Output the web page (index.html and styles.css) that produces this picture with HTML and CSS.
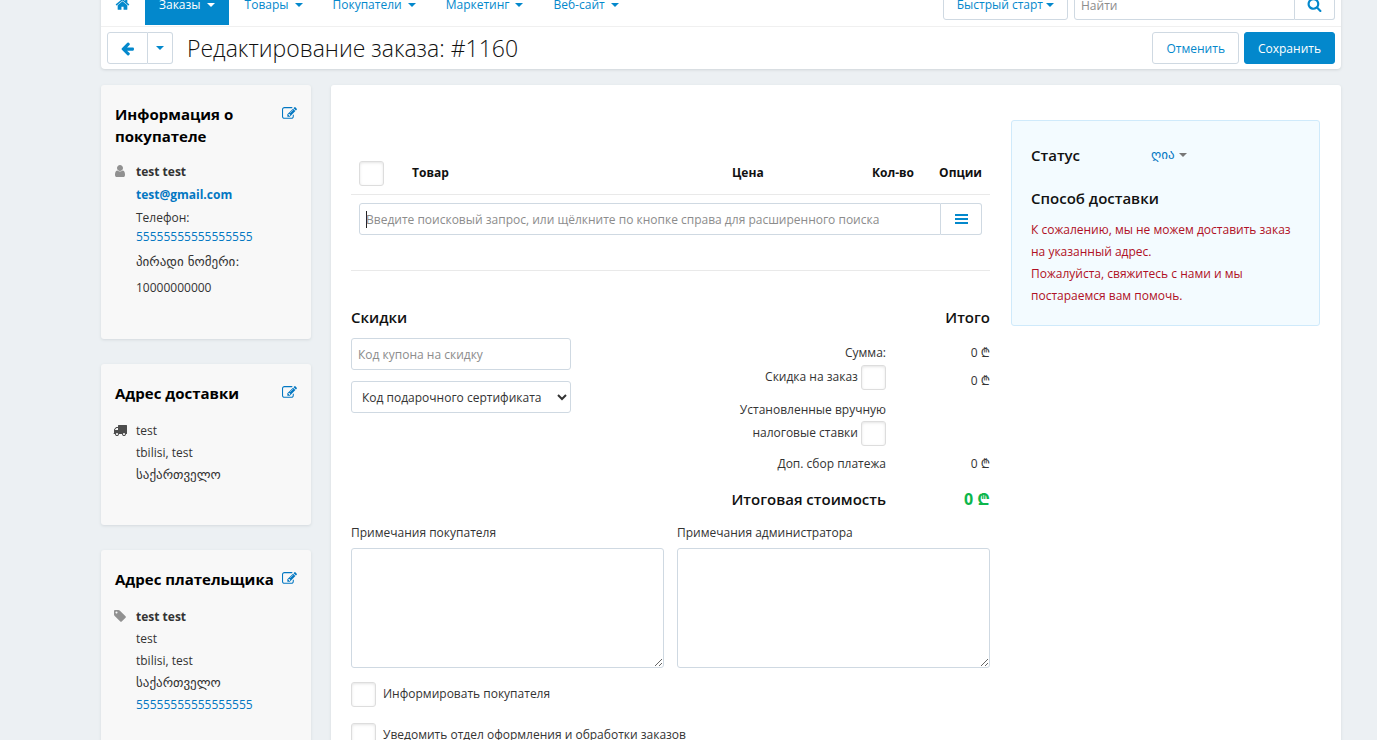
FILE: index.html
```html
<!DOCTYPE html>
<html lang="ru">
<head>
<meta charset="utf-8">
<meta name="viewport" content="width=device-width, initial-scale=1">
<title>Редактирование заказа: #1160</title>
<link rel="stylesheet" href="styles.css">
</head>
<body>
<svg class="sprite" aria-hidden="true">
  <symbol id="i-home" viewBox="0 0 1792 1792"><path d="M1472 992v480q0 26-19 45t-45 19h-384v-384h-256v384h-384q-26 0-45-19t-19-45v-480q0-1 .5-3t.5-3l575-474 575 474q1 2 1 6zm223-69l-62 74q-8 9-21 11h-3q-13 0-21-7l-692-577-692 577q-12 8-24 7-13-2-21-11l-62-74q-8-10-7-23.5t11-21.5l719-599q32-26 76-26t76 26l244 204v-195q0-14 9-23t23-9h192q14 0 23 9t9 23v408l219 182q10 8 11 21.5t-7 23.5z"/></symbol>
  <symbol id="i-back" viewBox="0 0 1792 1792"><path d="M1664 896v128q0 53-32.5 90.5t-84.5 37.5h-704l293 294q38 36 38 90t-38 90l-75 76q-37 37-90 37-52 0-91-37l-651-652q-37-37-37-90 0-52 37-91l651-650q38-38 91-38 52 0 90 38l75 74q38 38 38 91t-38 91l-293 293h704q52 0 84.5 37.5t32.5 90.5z"/></symbol>
  <symbol id="i-search" viewBox="0 0 1792 1792"><path d="M1216 832q0-185-131.5-316.5t-316.5-131.5-316.5 131.5-131.5 316.5 131.5 316.5 316.5 131.5 316.5-131.5 131.5-316.5zm512 832q0 52-38 90t-90 38q-54 0-90-38l-343-342q-179 124-399 124-143 0-273.5-55.5t-225-150-150-225-55.5-273.5 55.5-273.5 150-225 225-150 273.5-55.5 273.5 55.5 225 150 150 225 55.5 273.5q0 220-124 399l343 343q37 37 37 90z"/></symbol>
  <symbol id="i-edit" viewBox="0 0 1792 1792"><path d="M888 1184l116-116-152-152-116 116v56h96v96h56zm440-720q-16-16-33 1l-350 350q-17 17-1 33t33-1l350-350q17-17 1-33zm80 594v190q0 119-84.5 203.5t-203.5 84.5h-832q-119 0-203.5-84.5t-84.5-203.5v-832q0-119 84.5-203.5t203.5-84.5h832q63 0 117 25 15 7 18 23 3 17-9 29l-49 49q-14 14-32 8-23-6-45-6h-832q-66 0-113 47t-47 113v832q0 66 47 113t113 47h832q66 0 113-47t47-113v-126q0-13 9-22l64-64q15-15 35-7t20 29zm-96-738l288 288-672 672h-288v-288zm444 132l-92 92-288-288 92-92q28-28 68-28t68 28l152 152q28 28 28 68t-28 68z"/></symbol>
  <symbol id="i-user" viewBox="0 0 1792 1792"><path d="M1536 1399q0 109-62.5 187t-150.5 78h-854q-88 0-150.5-78t-62.5-187q0-85 8.5-160.5t31.5-152 58.5-131 94-89 134.5-34.5q131 128 313 128t313-128q76 0 134.5 34.5t94 89 58.5 131 31.5 152 8.5 160.5zm-256-887q0 159-112.5 271.5t-271.5 112.5-271.5-112.5-112.5-271.5 112.5-271.5 271.5-112.5 271.5 112.5 112.5 271.5z"/></symbol>
  <symbol id="i-truck" viewBox="0 0 1792 1792"><path d="M640 1408q0-52-38-90t-90-38-90 38-38 90 38 90 90 38 90-38 38-90zm-384-512h384v-256h-158q-13 0-22 9l-195 195q-9 9-9 22v30zm1280 512q0-52-38-90t-90-38-90 38-38 90 38 90 90 38 90-38 38-90zm256-1088v1024q0 15-4 26.5t-13.5 18.5-16.5 11.5-23.5 6-22.5 2-25.5 0-22.5-.5q0 106-75 181t-181 75-181-75-75-181h-384q0 106-75 181t-181 75-181-75-75-181h-64q-3 0-22.5.5t-25.5 0-22.5-2-23.5-6-16.5-11.5-13.5-18.5-4-26.5q0-26 19-45t45-19v-320q0-8-.5-35t0-38 2.5-34.5 6.5-37 14-30.5 22.5-30l198-198q19-19 50.5-32t58.5-13h160v-192q0-26 19-45t45-19h1024q26 0 45 19t19 45z"/></symbol>
  <symbol id="i-tag" viewBox="0 0 1792 1792"><path d="M576 448q0-53-37.5-90.5t-90.5-37.5-90.5 37.5-37.5 90.5 37.5 90.5 90.5 37.5 90.5-37.5 37.5-90.5zm1067 576q0 53-37 90l-491 492q-39 37-91 37-53 0-90-37l-715-716q-38-37-64.5-101t-26.5-117v-416q0-52 38-90t90-38h416q53 0 117 26.5t102 64.5l715 714q37 39 37 91z"/></symbol>
  <symbol id="i-bars" viewBox="0 0 13 10"><path d="M0 0h13v2H0zM0 4h13v2H0zM0 8h13v2H0z"/></symbol>
</svg>

<div class="shell">
  <header class="top">
    <div class="navbar">
      <nav class="menu">
        <a class="home" href="#" aria-label="Главная"><svg class="icon"><use href="#i-home"/></svg></a>
        <a class="active" href="#">Заказы<span class="caret"></span></a>
        <a href="#">Товары<span class="caret"></span></a>
        <a href="#">Покупатели<span class="caret"></span></a>
        <a href="#">Маркетинг<span class="caret"></span></a>
        <a href="#">Веб-сайт<span class="caret"></span></a>
      </nav>
      <div class="tools">
        <button class="btn quick" type="button">Быстрый старт<span class="caret"></span></button>
        <form class="group find">
          <input class="field" type="search" placeholder="Найти" aria-label="Найти">
          <button class="btn" type="button" aria-label="Искать"><svg class="icon"><use href="#i-search"/></svg></button>
        </form>
      </div>
    </div>
    <div class="titlebar">
      <div class="group back">
        <button class="btn" type="button" aria-label="Назад"><svg class="icon"><use href="#i-back"/></svg></button>
        <button class="btn" type="button" aria-label="История"><span class="caret"></span></button>
      </div>
      <h1>Редактирование заказа: #1160</h1>
      <button class="btn" type="button">Отменить</button>
      <button class="btn primary" type="button">Сохранить</button>
    </div>
  </header>

  <div class="page">
    <aside class="side">
      <section class="card customer">
        <div class="card-head"><h2>Информация о покупателе</h2><a href="#" aria-label="Изменить покупателя"><svg class="icon"><use href="#i-edit"/></svg></a></div>
        <div class="card-body">
          <svg class="icon muted"><use href="#i-user"/></svg>
          <div class="lines">
            <strong>test test</strong>
            <a class="mail" href="#">test@gmail.com</a>
            <div class="phone">Телефон:<br><a href="#">55555555555555555</a></div>
            <p class="extra geo">პირადი ნომერი:</p>
            <p class="extra">10000000000</p>
          </div>
        </div>
      </section>
      <section class="card">
        <div class="card-head"><h2>Адрес доставки</h2><a href="#" aria-label="Изменить адрес доставки"><svg class="icon"><use href="#i-edit"/></svg></a></div>
        <div class="card-body">
          <svg class="icon dark"><use href="#i-truck"/></svg>
          <div class="lines"><span>test</span><span>tbilisi, test</span><span class="geo">საქართველო</span></div>
        </div>
      </section>
      <section class="card">
        <div class="card-head"><h2>Адрес плательщика</h2><a href="#" aria-label="Изменить адрес плательщика"><svg class="icon"><use href="#i-edit"/></svg></a></div>
        <div class="card-body">
          <svg class="icon muted"><use href="#i-tag"/></svg>
          <div class="lines"><strong>test test</strong><span>test</span><span>tbilisi, test</span><span class="geo">საქართველო</span><a href="#">55555555555555555</a></div>
        </div>
      </section>
    </aside>

    <main class="main">
      <div class="order">
        <table class="goods">
          <thead>
            <tr>
              <th class="c-check"><input type="checkbox" aria-label="Выбрать все"></th>
              <th class="c-name">Товар</th>
              <th class="c-price">Цена</th>
              <th class="c-qty">Кол-во</th>
              <th class="c-opt">Опции</th>
            </tr>
          </thead>
          <tbody>
            <tr>
              <td colspan="5">
                <div class="group lookup">
                  <input class="field" type="text" aria-label="Поиск товара" placeholder="Введите поисковый запрос, или щёлкните по кнопке справа для расширенного поиска">
                  <button class="btn" type="button" aria-label="Расширенный поиск"><svg class="bars"><use href="#i-bars"/></svg></button>
                </div>
              </td>
            </tr>
          </tbody>
        </table>

        <div class="summary">
          <section class="discounts">
            <h3>Скидки</h3>
            <input class="field" type="text" placeholder="Код купона на скидку" aria-label="Код купона на скидку">
            <select class="field" aria-label="Код подарочного сертификата"><option>Код подарочного сертификата</option></select>
          </section>
          <section class="totals">
            <h3>Итого</h3>
            <table>
              <tr><th>Сумма:</th><td>0 ₾</td></tr>
              <tr class="r-discount"><th><label for="disc">Скидка на заказ</label> <input id="disc" type="checkbox"></th><td>0 ₾</td></tr>
              <tr class="r-tax"><th><label for="tax">Установленные вручную налоговые ставки</label> <input id="tax" type="checkbox"></th><td></td></tr>
              <tr class="r-fee"><th>Доп. сбор платежа</th><td>0 ₾</td></tr>
              <tr class="r-total"><th>Итоговая стоимость</th><td>0 ₾</td></tr>
            </table>
          </section>
        </div>

        <div class="notes">
          <div><label for="n1">Примечания покупателя</label><textarea class="field" id="n1"></textarea></div>
          <div><label for="n2">Примечания администратора</label><textarea class="field" id="n2"></textarea></div>
        </div>
        <div class="notify">
          <label><input type="checkbox">Информировать покупателя</label>
          <label><input type="checkbox">Уведомить отдел оформления и обработки заказов</label>
        </div>
      </div>

      <aside class="status">
        <div class="status-row"><h3>Статус</h3><button class="link geo" type="button">ღია<span class="caret"></span></button></div>
        <h3>Способ доставки</h3>
        <p>К сожалению, мы не можем доставить заказ на указанный адрес.<br>Пожалуйста, свяжитесь с нами и мы постараемся вам помочь.</p>
      </aside>
    </main>
  </div>
</div>
</body>
</html>
```

FILE: styles.css
```css
* { box-sizing: border-box; }
body {
  margin: 0;
  height: 100vh;
  overflow: hidden;
  background: #ecf0f3;
  color: #333;
  font: 12px/22px "Open Sans", "Noto Sans", "DejaVu Sans", sans-serif;
}
h1, h2, h3, p { margin: 0; }
a { color: #0377c2; text-decoration: none; }
button, input, select, textarea { font: inherit; color: inherit; margin: 0; }
.sprite { position: absolute; width: 0; height: 0; }
.icon { width: 15px; height: 15px; fill: currentColor; flex: none; display: block; }
.geo { font-family: "DejaVu Sans", sans-serif; font-size: 13px; }
.caret {
  display: inline-block;
  border: 4px solid transparent;
  border-top-color: currentColor;
  border-bottom: 0;
  vertical-align: middle;
}
.shell { margin: 0 36px 0 101px; }

.field {
  border: 1px solid #cfd9e2;
  border-radius: 3px;
  background-color: #fff;
  height: 32px;
  padding: 2px 6px 0;
  outline: 0;
  min-width: 0;
}
.field::placeholder { color: #8c8c8c; opacity: 1; }
.btn {
  display: inline-flex;
  align-items: center;
  justify-content: center;
  height: 32px;
  padding: 1px 13px 0;
  border: 1px solid #cfd9e2;
  border-radius: 3px;
  background: #fff;
  color: #0388cc;
  white-space: nowrap;
}
.btn.primary { background: #0388cc; border-color: #0388cc; color: #fff; }
.group { display: flex; }
.group .btn { padding-top: 0; }
.group > :first-child { border-radius: 3px 0 0 3px; }
.group > :last-child { border-radius: 0 3px 3px 0; border-left: 0; }
input[type="checkbox"] {
  appearance: none;
  width: 25px;
  height: 25px;
  border: 1px solid #ddd;
  border-radius: 3px;
  background: #fff;
  box-shadow: inset 0 1px 3px #e4e4e4;
  flex: none;
  vertical-align: middle;
}

/* The page is shown scrolled slightly past the top of the menu. */
.top {
  margin-top: -17px;
  background: #fff;
  border-radius: 0 0 4px 4px;
  box-shadow: 0 1px 3px #cfd4d8;
}
.navbar {
  display: flex;
  justify-content: space-between;
  align-items: flex-end;
  height: 44px;
  border-bottom: 1px solid #f0f0f0;
}
.menu { display: flex; gap: 2px; padding-bottom: 1px; }
.menu a { display: flex; align-items: center; gap: 6px; height: 42px; padding: 1px 14px 0; color: #0388cc; }
.menu .home { padding: 0 13px 0 14px; }
.menu .active { background: #0388cc; color: #fff; }
.tools { display: flex; gap: 6px; padding: 0 6px 6px 0; }
.quick { gap: 3px; }
.find .field { width: 221px; }
.find .btn { padding: 0 12px; }
.titlebar { display: flex; align-items: center; gap: 5px; height: 42px; padding: 0 6px; }
.titlebar h1 { flex: 1; padding-left: 9px; font-size: 23px; font-weight: 300; line-height: 32px; color: #111; }
.back .btn { padding: 0 12px; }
.back .btn:last-child { padding: 0 8px; }

.page { display: grid; grid-template-columns: 210px minmax(0, 1fr); gap: 20px; margin-top: 16px; align-items: start; }
.side { display: grid; gap: 25px; }
.card { min-height: 161px; padding: 18px 14px; background: #f8f8f8; border-radius: 3px; box-shadow: 0 1px 3px #d4d9dd; }
.card:last-child { min-height: 220px; }
.card.customer { min-height: 254px; }
.card-head { display: flex; justify-content: space-between; padding-bottom: 16px; }
.customer .card-head { padding-bottom: 14px; }
.card-head a { padding-top: 3px; }
h2 { font-size: 15px; font-weight: 700; line-height: 22px; color: #000; white-space: nowrap; }
.customer h2 { white-space: normal; }
.card-body { display: flex; gap: 9px; margin-left: -2px; }
.card-body .icon { width: 14px; height: 14px; margin-top: 3px; }
.muted { color: #919191; }
.dark { color: #4d4d4d; }
.lines { display: grid; }
.mail { font-weight: 700; line-height: 24px; }
.phone { line-height: 19px; padding: 1px 0 3px; }
.extra { line-height: 26px; }

.main {
  display: grid;
  grid-template-columns: minmax(0, 1fr) 309px;
  gap: 21px;
  align-items: start;
  padding: 35px 21px 35px 20px;
  background: #fff;
  border-radius: 3px;
  box-shadow: 0 1px 3px #d4d9dd;
}
.goods { width: 100%; margin-top: 32px; border-collapse: collapse; table-layout: fixed; border-bottom: 1px solid #e9e9e9; }
.goods th { height: 42px; padding: 0 8px; text-align: left; font-weight: 700; color: #111; border-bottom: 1px solid #e9e9e9; }
.goods .c-check { width: 53px; padding-top: 1px; }
.goods .c-price { width: 118px; }
.goods .c-qty { width: 80px; text-align: right; }
.goods .c-opt { width: 68px; text-align: right; }
.goods td { padding: 8px 8px 35px; }
.lookup .field {
  flex: 1;
  background-image: linear-gradient(#222, #222);
  background-repeat: no-repeat;
  background-size: 1px 17px;
  background-position: 6px 7px;
}
.bars { width: 13px; height: 10px; fill: currentColor; }
.lookup .btn { width: 41px; }

h3 { font-size: 15px; font-weight: 600; line-height: 22px; color: #111; }
.summary { display: flex; justify-content: space-between; padding-top: 35px; }
.discounts { display: grid; gap: 11px; width: 220px; align-content: start; }
.discounts h3 { margin-bottom: -1px; }
.totals { text-align: right; }
.totals table { border-collapse: collapse; margin-top: 14px; }
.totals th { width: 164px; padding: 0; font-weight: 400; text-align: right; vertical-align: top; }
.totals td { width: 104px; padding: 0; text-align: right; vertical-align: top; }
.totals .r-discount th { padding-top: 1px; }
.totals .r-discount td { padding-top: 6px; }
.totals .r-tax th { padding-top: 7px; }
.totals .r-fee th, .totals .r-fee td { padding-top: 7px; }
.totals .r-total th { padding-top: 13px; font-size: 15px; font-weight: 600; color: #111; white-space: nowrap; }
.totals .r-total td { padding-top: 13px; font-size: 16px; font-weight: 700; color: #0cb64b; }

.notes { display: grid; grid-template-columns: 1fr 1fr; gap: 13px; padding-top: 12px; }
.notes label { display: block; line-height: 22px; margin-bottom: 4px; }
.notes textarea { display: block; width: 100%; height: 120px; resize: vertical; }
.notify { display: grid; gap: 16px; padding-top: 14px; }
.notify label { display: flex; align-items: center; gap: 7px; }

.status { padding: 23px 19px 18px; background: #f3fbff; border: 1px solid #cfeafb; border-radius: 3px; }
.status-row { display: grid; grid-template-columns: 120px 1fr; margin-bottom: 21px; }
.status p { padding-top: 10px; color: #b01025; }
.link { display: inline-flex; align-items: center; gap: 4px; padding: 0; border: 0; background: none; color: #0377c2; }
.link .caret { color: #777; }
```
